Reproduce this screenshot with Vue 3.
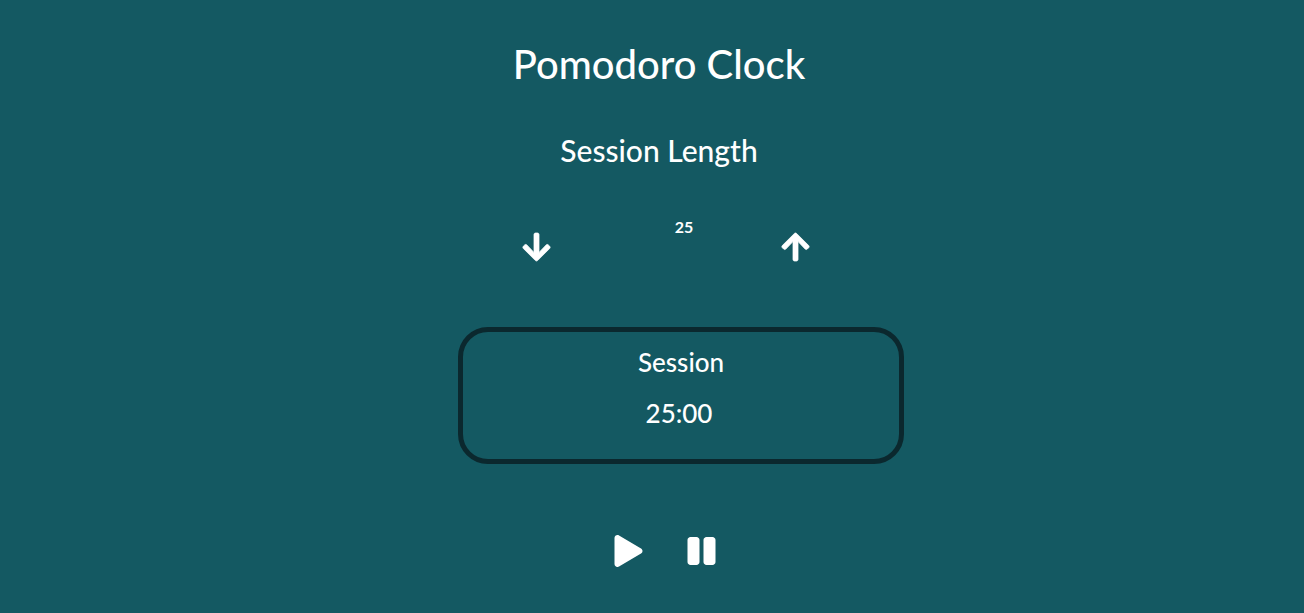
<script setup>
import { computed, onBeforeUnmount, ref } from 'vue'

const length = ref(25)
const remaining = ref(25 * 60)
let timer = null

const display = computed(() => {
  const minutes = String(Math.floor(remaining.value / 60)).padStart(2, '0')
  const seconds = String(remaining.value % 60).padStart(2, '0')
  return `${minutes}:${seconds}`
})

function changeLength(step) {
  if (timer) return
  length.value = Math.min(60, Math.max(1, length.value + step))
  remaining.value = length.value * 60
}

function pause() {
  clearInterval(timer)
  timer = null
}

function play() {
  if (timer) return
  timer = setInterval(() => {
    if (remaining.value > 0) remaining.value--
    else pause()
  }, 1000)
}

onBeforeUnmount(pause)
</script>

<template>
  <main class="clock">
    <h1 class="title">Pomodoro Clock</h1>
    <h2 class="subtitle">Session Length</h2>

    <div class="length">
      <button type="button" class="icon-button" aria-label="Decrease session length" @click="changeLength(-1)">
        <svg viewBox="0 0 448 512" aria-hidden="true">
          <path d="M413.1 222.5l22.2 22.2c9.4 9.4 9.4 24.6 0 33.9L241 473c-9.4 9.4-24.6 9.4-33.9 0L12.7 278.6c-9.4-9.4-9.4-24.6 0-33.9l22.2-22.2c9.5-9.5 25-9.3 34.3.4L184 343.4V56c0-13.3 10.7-24 24-24h32c13.3 0 24 10.7 24 24v287.4l114.8-120.5c9.3-9.8 24.8-10 34.3-.4z" />
        </svg>
      </button>
      <span class="count">{{ length }}</span>
      <button type="button" class="icon-button" aria-label="Increase session length" @click="changeLength(1)">
        <svg viewBox="0 0 448 512" aria-hidden="true">
          <path d="M34.9 289.5l-22.2-22.2c-9.4-9.4-9.4-24.6 0-33.9L207 39c9.4-9.4 24.6-9.4 33.9 0l194.3 194.3c9.4 9.4 9.4 24.6 0 33.9L413 289.4c-9.5 9.5-25 9.3-34.3-.4L264 168.6V456c0 13.3-10.7 24-24 24h-32c-13.3 0-24-10.7-24-24V168.6L69.2 289.1c-9.3 9.8-24.8 10-34.3.4z" />
        </svg>
      </button>
    </div>

    <section class="session">
      <p class="label">Session</p>
      <p class="time">{{ display }}</p>
    </section>

    <div class="controls">
      <button type="button" class="icon-button" aria-label="Play" @click="play">
        <svg viewBox="0 0 448 512" aria-hidden="true">
          <path d="M424.4 214.7L72.4 6.6C43.8-10.3 0 6.1 0 47.9V464c0 37.5 40.7 60.1 72.4 41.3l352-208c31.4-18.5 31.5-64.1 0-82.6z" />
        </svg>
      </button>
      <button type="button" class="icon-button" aria-label="Pause" @click="pause">
        <svg viewBox="0 0 448 512" aria-hidden="true">
          <path d="M144 479H48c-26.5 0-48-21.5-48-48V79c0-26.5 21.5-48 48-48h96c26.5 0 48 21.5 48 48v352c0 26.5-21.5 48-48 48zm304-48V79c0-26.5-21.5-48-48-48h-96c-26.5 0-48 21.5-48 48v352c0 26.5 21.5 48 48 48h96c26.5 0 48-21.5 48-48z" />
        </svg>
      </button>
    </div>
  </main>
</template>

<style>
body {
  background: #145962;
}
</style>

<style scoped>
.clock {
  display: flex;
  flex-direction: column;
  align-items: center;
  padding: 36px 16px 44px;
  color: #fff;
  font-family: "Comic Sans MS", Lato, sans-serif;
}

.title,
.subtitle,
.label,
.time {
  margin: 0;
  font-weight: 500;
}

.title {
  padding-left: 14px;
  font-size: 40px;
  line-height: 56px;
}

.subtitle {
  margin-top: 38px;
  padding-left: 14px;
  font-size: 30px;
  line-height: 40px;
}

.length {
  display: flex;
  justify-content: space-between;
  width: 288px;
  margin: 47px 0 0 28px;
}

.length .icon-button {
  margin-top: 14px;
}

.length path {
  stroke: currentColor;
  stroke-width: 12px;
}

.count {
  padding-left: 36px;
  font-size: 16px;
  font-weight: 700;
  line-height: 20px;
}

.session {
  box-sizing: border-box;
  width: 100%;
  max-width: 446px;
  margin: 64px 0 0 58px;
  padding: 12px 16px 28px;
  border: 5px solid #0b282e;
  border-radius: 30px;
  text-align: center;
}

.label,
.time {
  font-size: 26px;
  line-height: 36px;
}

.time {
  margin-top: 15px;
  padding-right: 4px;
}

.controls {
  display: flex;
  gap: 44px;
  margin: 71px 0 0 26px;
}

.icon-button {
  display: block;
  padding: 0;
  border: 0;
  background: none;
  color: inherit;
  cursor: pointer;
}

.icon-button svg {
  display: block;
  width: 29px;
  height: 32px;
  fill: currentColor;
}
</style>
